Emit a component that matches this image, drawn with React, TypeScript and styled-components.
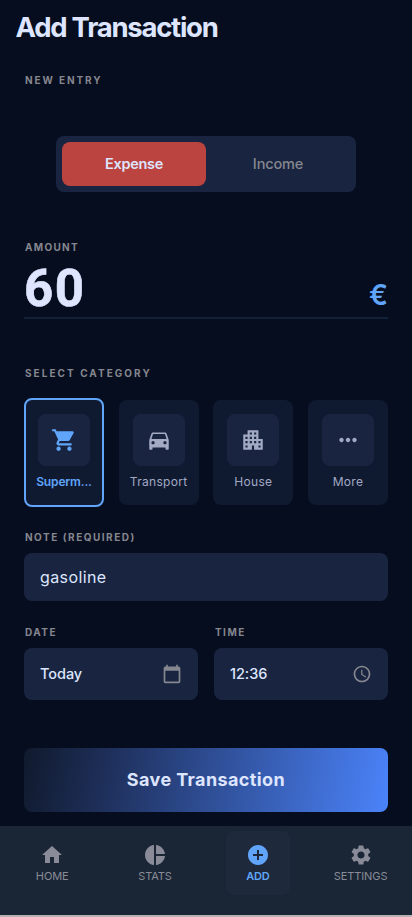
import React, { useState } from 'react';
import styled, { createGlobalStyle, css } from 'styled-components';
import {
  MdAccessTime,
  MdAddCircle,
  MdApartment,
  MdCalendarToday,
  MdDirectionsCar,
  MdHome,
  MdMoreHoriz,
  MdPieChart,
  MdSettings,
  MdShoppingCart,
} from 'react-icons/md';

const Global = createGlobalStyle`
  * { box-sizing: border-box; }
  body { margin: 0; background: #060d1e; font-family: Inter, sans-serif; }
  button, input { font: inherit; border: 0; padding: 0; margin: 0; background: none; outline: 0; }
  svg { display: block; flex: none; }
`;

const Screen = styled.div`
  display: flex;
  flex-direction: column;
  width: 412px;
  height: 917px;
  overflow: hidden;
  color: #dee5ff;
  background: #060d1e;
`;

const Header = styled.header`
  height: 56px;
  padding: 0 15.5px;
`;

const Title = styled.h1`
  margin: 0;
  font-size: 27.5px;
  line-height: 55px;
  font-weight: 700;
  letter-spacing: -1.25px;
  white-space: nowrap;
`;

const Form = styled.main`
  height: 770px;
  flex: none;
  display: flex;
  flex-direction: column;
  padding: 16px 24px 13px;
`;

const Label = styled.div<{ $spacing?: number }>`
  height: 16px;
  padding-left: 1px;
  line-height: 16px;
  font-size: 10px;
  font-weight: 700;
  letter-spacing: ${(p) => p.$spacing ?? 1.45}px;
  color: #85878f;
  white-space: nowrap;
`;

const Segmented = styled.div`
  display: flex;
  align-self: center;
  width: 300px;
  height: 56px;
  margin: 48px 0 47px;
  padding: 6px;
  border-radius: 8px;
  background: #192540;
`;

const Segment = styled.button<{ $active: boolean }>`
  flex: 1;
  padding-bottom: 2px;
  border-radius: 8px;
  font-size: 14.5px;
  font-weight: ${(p) => (p.$active ? 600 : 500)};
  letter-spacing: ${(p) => (p.$active ? '-0.3px' : '-0.15px')};
  color: ${(p) => (p.$active ? '#dee5ff' : '#85878f')};
  background: ${(p) => (p.$active ? '#bb4440' : 'transparent')};
`;

const AmountRow = styled.div`
  display: flex;
  justify-content: space-between;
  height: 64px;
  margin-bottom: 46px;
  border-bottom: 2px solid #12213a;
`;

const Amount = styled.div`
  font-family: Roboto, sans-serif;
  font-size: 51px;
  line-height: 68px;
  font-weight: 700;
  letter-spacing: 1.6px;
  -webkit-text-stroke: 0.6px #dee5ff;
`;

const Currency = styled.div`
  font-size: 28px;
  line-height: 80px;
  font-weight: 600;
  color: #60a5fa;
`;

const Categories = styled.div`
  display: flex;
  align-items: center;
  justify-content: space-between;
  height: 109px;
  margin: 16.6px 0 22.1px;
`;

const CategoryTile = styled.button<{ $selected: boolean }>`
  display: flex;
  flex-direction: column;
  align-items: center;
  width: 80px;
  height: 105px;
  padding: 14px 0 0;
  border-radius: 8px;
  background: #0f1930;
  font-size: 12px;
  line-height: 16px;
  letter-spacing: 0.3px;
  color: #a3aac4;
  ${(p) =>
    p.$selected &&
    css`
      height: 109px;
      border: 2px solid #60a5fa;
      color: #60a5fa;
      font-weight: 600;
      letter-spacing: -0.15px;
    `}
`;

const IconBox = styled.span`
  display: flex;
  align-items: center;
  justify-content: center;
  width: 52px;
  height: 52px;
  margin-bottom: 8px;
  border-radius: 8px;
  background: #192540;
  font-size: 26px;
`;

const Field = styled.div<{ $tall?: boolean }>`
  display: flex;
  align-items: center;
  justify-content: space-between;
  height: ${(p) => (p.$tall ? 52 : 48)}px;
  margin-top: 8px;
  padding: 0 16px;
  border-radius: 8px;
  background: #192540;
  svg {
    width: 20px;
    height: 20px;
    color: #85878f;
  }
`;

const NoteInput = styled.input`
  width: 100%;
  color: #dee5ff;
  font-size: 16px;
  letter-spacing: 0.4px;
`;

const FieldValue = styled.span`
  padding-bottom: 1px;
  font-size: 14.5px;
  font-weight: 450;
  letter-spacing: -0.05px;
`;

const When = styled.div`
  display: grid;
  grid-template-columns: 1fr 1fr;
  gap: 16px;
  margin: 23px 0 48px;
`;

const SaveButton = styled.button`
  height: 64px;
  flex: none;
  border-radius: 8px;
  color: #dee5ff;
  font-size: 18px;
  font-weight: 700;
  letter-spacing: 0.4px;
  background: linear-gradient(100deg, #101a2d 0%, #1e2f5a 23%, #4b83fa 100%);
`;

const NavBar = styled.nav`
  display: grid;
  grid-template-columns: repeat(4, 1fr);
  justify-items: center;
  flex: none;
  height: 91px;
  padding: 5px 0 0 0.8px;
  border-bottom: 2px solid #b9b2b4;
  background: #1a2635;
`;

const NavItem = styled.button<{ $active: boolean }>`
  display: flex;
  flex-direction: column;
  align-items: center;
  width: 64px;
  height: 64px;
  padding-top: 12px;
  border-radius: 8px;
  font-size: 11px;
  line-height: 14px;
  letter-spacing: ${(p) => (p.$active ? -0.3 : -0.1)}px;
  color: ${(p) => (p.$active ? '#60a5fa' : '#898c98')};
  background: ${(p) => (p.$active ? '#1e293b' : 'transparent')};
  font-weight: ${(p) => (p.$active ? 600 : 400)};
  svg {
    width: 24px;
    height: 24px;
    margin-bottom: 2px;
  }
`;

const categories = [
  { label: 'Superm...', Icon: MdShoppingCart },
  { label: 'Transport', Icon: MdDirectionsCar },
  { label: 'House', Icon: MdApartment },
  { label: 'More', Icon: MdMoreHoriz },
];

const destinations = [
  { label: 'HOME', Icon: MdHome },
  { label: 'STATS', Icon: MdPieChart },
  { label: 'ADD', Icon: MdAddCircle },
  { label: 'SETTINGS', Icon: MdSettings },
];

export default function App() {
  const [kind, setKind] = useState('Expense');
  const [category, setCategory] = useState('Superm...');
  const [note, setNote] = useState('gasoline');

  return (
    <>
      <Global />
      <Screen>
        <Header>
          <Title>Add Transaction</Title>
        </Header>
        <Form>
          <Label $spacing={1.9}>NEW ENTRY</Label>
          <Segmented>
            {['Expense', 'Income'].map((k) => (
              <Segment key={k} $active={k === kind} onClick={() => setKind(k)}>
                {k}
              </Segment>
            ))}
          </Segmented>
          <Label $spacing={1.3}>AMOUNT</Label>
          <AmountRow>
            <Amount>60</Amount>
            <Currency>€</Currency>
          </AmountRow>
          <Label $spacing={2.05}>SELECT CATEGORY</Label>
          <Categories>
            {categories.map(({ label, Icon }) => (
              <CategoryTile
                key={label}
                $selected={label === category}
                onClick={() => setCategory(label)}
              >
                <IconBox>
                  <Icon />
                </IconBox>
                {label}
              </CategoryTile>
            ))}
          </Categories>
          <Label $spacing={1.5}>NOTE (REQUIRED)</Label>
          <Field>
            <NoteInput value={note} onChange={(e) => setNote(e.target.value)} />
          </Field>
          <When>
            <div>
              <Label>DATE</Label>
              <Field $tall>
                <FieldValue>Today</FieldValue>
                <MdCalendarToday />
              </Field>
            </div>
            <div>
              <Label>TIME</Label>
              <Field $tall>
                <FieldValue>12:36</FieldValue>
                <MdAccessTime />
              </Field>
            </div>
          </When>
          <SaveButton>Save Transaction</SaveButton>
        </Form>
        <NavBar>
          {destinations.map(({ label, Icon }) => (
            <NavItem key={label} $active={label === 'ADD'}>
              <Icon />
              {label}
            </NavItem>
          ))}
        </NavBar>
      </Screen>
    </>
  );
}
